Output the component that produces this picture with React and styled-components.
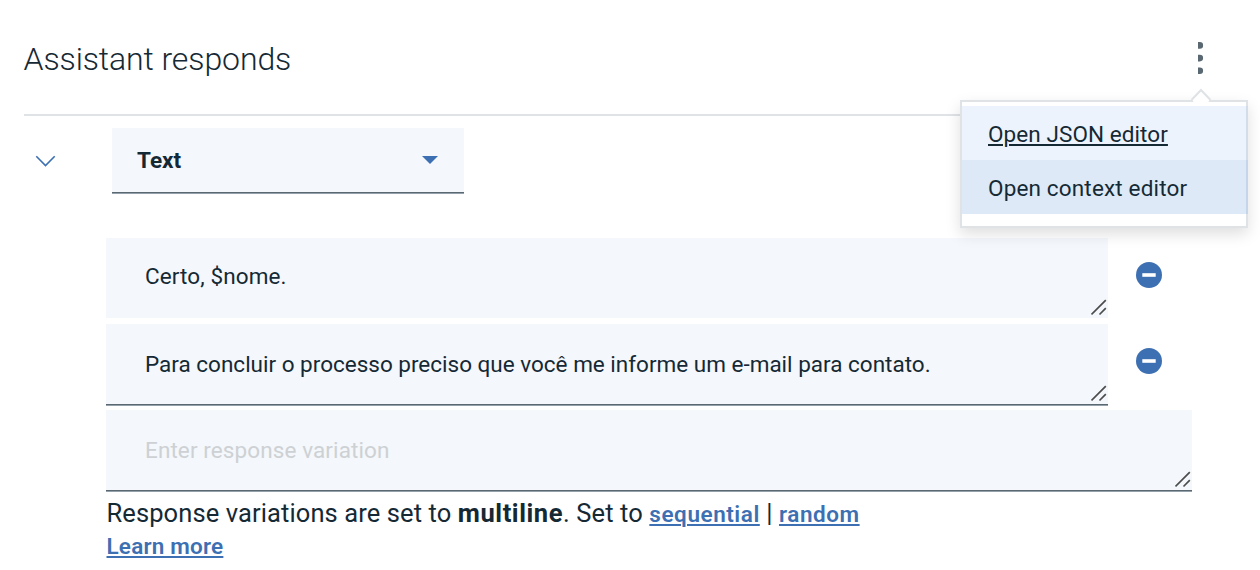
import React from "react";
import styled, { createGlobalStyle, css } from "styled-components";

const ink = "#152935";
const blue = "#3d70b2";
const fieldBg = "#f4f7fb";
const line = "#dfe3e6";

const GlobalStyle = createGlobalStyle`
  *, *::before, *::after { box-sizing: border-box; }
  body {
    margin: 0;
    background: #fff;
    color: ${ink};
    font-family: Roboto, "Liberation Sans", sans-serif;
    -webkit-font-smoothing: antialiased;
  }
`;

const underline = css`
  box-shadow: 0 1px 0 #5a6872, 0 2px 0 #94a1aa;
`;

const Panel = styled.main`
  width: 1260px;
  height: 570px;
  padding: 0 12px 0 24px;
  overflow: hidden;
`;

const Header = styled.header`
  position: relative;
  display: flex;
  align-items: center;
  justify-content: space-between;
  height: 116px;
  border-bottom: 2px solid ${line};
`;

const Title = styled.h2`
  margin: 4px 0 0 -0.5px;
  font-size: 32px;
  line-height: 40px;
  font-weight: 360;
  letter-spacing: -0.1px;
  white-space: nowrap;
`;

const OverflowButton = styled.button`
  display: flex;
  margin: 2px 44px 0 0;
  padding: 0;
  border: 0;
  background: none;
`;

const Menu = styled.ul`
  position: absolute;
  top: 100px;
  right: 0;
  width: 288px;
  height: 128px;
  margin: 0;
  padding: 4px 0 0;
  list-style: none;
  background: #fff;
  border: 2px solid ${line};
  box-shadow: 0 6px 14px rgba(0, 0, 0, 0.13);
`;

const MenuCaret = styled.svg`
  position: absolute;
  top: -14px;
  right: 33px;
`;

const MenuItem = styled.li`
  display: flex;
  align-items: center;
  height: 54px;
  margin-right: -2px;
  padding: 2px 0 0 26px;
  font-size: 22.5px;
  letter-spacing: ${(p) => (p.$focused ? "0.08px" : "0.16px")};
  white-space: nowrap;
  background: ${(p) => (p.$active ? "#dde9f7" : "#ecf3fc")};
  border-right: 2px solid ${(p) => (p.$active ? "#c5d5ea" : "#d3dde9")};
  text-decoration: ${(p) => (p.$focused ? "underline" : "none")};
  text-decoration-thickness: 2px;
  text-underline-offset: 2px;
`;

const TypeRow = styled.div`
  display: flex;
  align-items: center;
  height: 64px;
  margin-top: 12px;
`;

const Collapse = styled.button`
  display: flex;
  width: 88px;
  margin-top: 1px;
  padding: 0 0 0 11px;
  border: 0;
  background: none;
`;

const Select = styled.div`
  display: flex;
  align-items: center;
  justify-content: space-between;
  width: 352px;
  height: 64px;
  padding: 0 26px 0 25px;
  background: ${fieldBg};
  ${underline}
  font-size: 22.5px;
  font-weight: 700;
  letter-spacing: 0;
`;

const Variations = styled.section`
  display: flex;
  flex-direction: column;
  gap: 6px;
  margin: 46px 0 0 82px;
`;

const VariationRow = styled.div`
  display: flex;
  align-items: center;
  gap: 28px;
`;

const Field = styled.div`
  display: flex;
  align-items: flex-end;
  justify-content: space-between;
  width: ${(p) => (p.$wide ? "1086px" : "1002px")};
  height: 80px;
  padding: 0 1px 2px 39px;
  background: ${fieldBg};
  ${(p) => p.$lined && underline}
`;

const FieldText = styled.span`
  align-self: center;
  padding: ${(p) => (p.$lowered ? "2px 0 0" : "0 0 2px")};
  font-size: 22.5px;
  line-height: 30px;
  letter-spacing: ${(p) => p.$tracking};
  color: ${(p) => (p.$placeholder ? "#cdd1d4" : ink)};
  white-space: nowrap;
`;

const RemoveButton = styled.button`
  display: flex;
  margin-top: -6px;
  padding: 0;
  border: 0;
  background: none;
`;

const Footnote = styled.p`
  margin: 6px 0 0 82.5px;
  font-size: 25.5px;
  line-height: 34px;
  letter-spacing: 0.1px;
  white-space: nowrap;
`;

const Mode = styled.b`
  letter-spacing: 0.58px;
`;

const Link = styled.a`
  color: ${blue};
  font-size: 22.5px;
  font-weight: 600;
  letter-spacing: ${(p) => p.$tracking};
  text-decoration: underline;
  text-decoration-thickness: 2px;
  text-underline-offset: 2px;
`;

const LearnMore = styled.div`
  margin-left: 82.5px;
  line-height: 30px;
`;

const Grip = () => (
  <svg width="16" height="17" viewBox="0 0 16 17" fill="none" stroke="#4c4c4c" strokeWidth="1.7">
    <path d="M0.5 15.5 L14.8 1.2 M8.5 15.5 L14.8 9.2" />
  </svg>
);

const Remove = () => (
  <RemoveButton aria-label="Remove variation">
    <svg width="26" height="26" viewBox="0 0 26 26">
      <circle cx="13" cy="13" r="13" fill={blue} />
      <rect x="6.3" y="11.2" width="13.4" height="3.6" fill="#fff" />
    </svg>
  </RemoveButton>
);

export default function App() {
  return (
    <Panel>
      <GlobalStyle />
      <Header>
        <Title>Assistant responds</Title>
        <OverflowButton aria-label="More options">
          <svg width="8" height="34" viewBox="0 0 8 34" fill="#5a6872">
            <path d="M2 1.1 H3.8 A3.3 3.3 0 0 1 3.8 7.7 H2 Z M2 13.8 H3.8 A3.3 3.3 0 0 1 3.8 20.4 H2 Z M2 26.4 H3.8 A3.3 3.3 0 0 1 3.8 33 H2 Z" />
          </svg>
        </OverflowButton>
        <Menu>
          <MenuCaret width="24" height="16" viewBox="0 0 24 16">
            <path d="M3 11.5 L12 2 L21 11.5 L19 14.5 H5 Z" fill="#fff" />
            <path d="M2.5 12 L12 2 L21.5 12" fill="none" stroke={line} strokeWidth="2" />
          </MenuCaret>
          <MenuItem $focused>Open JSON editor</MenuItem>
          <MenuItem $active>Open context editor</MenuItem>
        </Menu>
      </Header>

      <TypeRow>
        <Collapse aria-label="Collapse">
          <svg width="21" height="12" viewBox="0 0 21 12" fill="none" stroke={blue} strokeWidth="1.6">
            <path d="M1.3 1.3 L10.5 10.5 L19.7 1.3" />
          </svg>
        </Collapse>
        <Select>
          Text
          <svg width="16" height="8" viewBox="0 0 16 8" fill={blue}>
            <path d="M0 0 H16 L8 8 Z" />
          </svg>
        </Select>
      </TypeRow>

      <Variations>
        <VariationRow>
          <Field>
            <FieldText $tracking="0.1px">Certo, $nome.</FieldText>
            <Grip />
          </Field>
          <Remove />
        </VariationRow>
        <VariationRow>
          <Field $lined>
            <FieldText $tracking="0" $lowered>
              Para concluir o processo preciso que você me informe um e-mail para contato.
            </FieldText>
            <Grip />
          </Field>
          <Remove />
        </VariationRow>
        <Field $wide $lined>
          <FieldText $placeholder $tracking="0.1px" $lowered>
            Enter response variation
          </FieldText>
          <Grip />
        </Field>
      </Variations>

      <Footnote>
        Response variations are set to <Mode>multiline</Mode>. Set to{" "}
        <Link $tracking="0.55px">sequential</Link> | <Link $tracking="0.55px">random</Link>
      </Footnote>
      <LearnMore>
        <Link $tracking="0.2px">Learn more</Link>
      </LearnMore>
    </Panel>
  );
}
